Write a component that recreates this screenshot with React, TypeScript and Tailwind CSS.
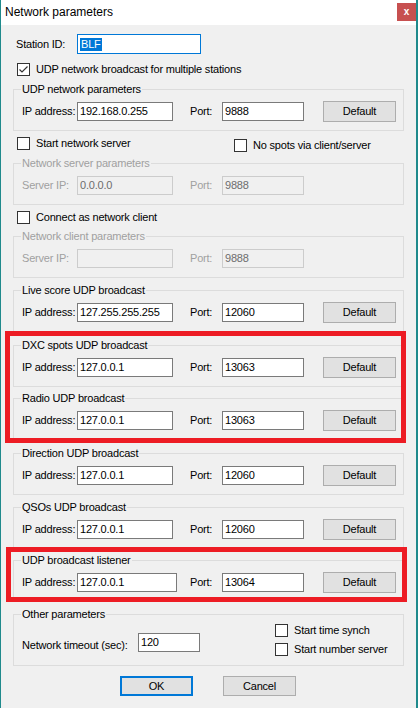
import React from "react";

const Box = ({ value, w, disabled }: { value: string; w: string; disabled?: boolean }) => (
    <div
        className={`flex h-[19px] ${w} items-center border pl-[2px] ${
            disabled ? "border-[#cccccc] bg-[#f0f0f0] text-[#6d6d6d]" : "border-[#7a7a7a] bg-white text-black"
        }`}
    >
        {value}
    </div>
);

const Check = ({ checked, label, className = "" }: { checked?: boolean; label: string; className?: string }) => (
    <div className={`flex h-[13px] items-center ${className}`}>
        <span className="flex h-[13px] w-[13px] shrink-0 items-center justify-center border border-[#333333] bg-white">
            {checked && (
                <svg width="11" height="11" viewBox="0 0 11 11">
                    <path d="M1.5 5.5 L4 8 L9.5 2.5" fill="none" stroke="#333333" strokeWidth="1.2" />
                </svg>
            )}
        </span>
        <span className="ml-[6px] whitespace-nowrap">{label}</span>
    </div>
);

type RowProps = {
    label?: string;
    ip: string;
    port: string;
    wide?: boolean;
    disabled?: boolean;
    button?: boolean;
};

const AddrRow = ({ label = "IP address:", ip, port, wide, disabled, button = true }: RowProps) => {
    const txt = disabled ? "text-[#a0a0a0]" : "text-black";
    return (
        <div className="flex h-[21px] items-center">
            <span className={`w-[55px] whitespace-nowrap ${txt}`}>{label}</span>
            <Box value={ip} w={wide ? "w-[100px]" : "w-[96px]"} disabled={disabled} />
            <span className={`${wide ? "ml-[13px]" : "ml-[17px]"} w-[32px] ${txt}`}>Port:</span>
            <Box value={port} w="w-[82px]" disabled={disabled} />
            {button && (
                <button className="ml-[19px] h-[21px] w-[73px] border border-[#adadad] bg-[#e1e1e1] text-black">
                    Default
                </button>
            )}
        </div>
    );
};

const Group = ({
    title,
    disabled,
    className = "",
    children,
}: {
    title: string;
    disabled?: boolean;
    className?: string;
    children: React.ReactNode;
}) => (
    <fieldset className={`w-[391px] border border-[#dcdcdc] pb-[8px] pl-[8px] pt-[5px] ${className}`}>
        <legend className={`-ml-[1px] px-[1px] leading-[13px] ${disabled ? "text-[#a0a0a0]" : "text-black"}`}>
            {title}
        </legend>
        {children}
    </fieldset>
);

export default function App() {
    return (
        <div className="flex h-[708px] w-[418px] flex-col border-l border-r-2 border-[#1f8a8c] bg-[#f0f0f0] font-['Liberation_Sans',Arial,sans-serif] text-[11px] leading-[13px] tracking-[-0.2px] text-black">
            {/* Title bar */}
            <div className="flex h-[25px] shrink-0 items-start justify-between bg-white">
                <span className="mt-[5px] pl-[4px] text-[12px] leading-[14px] tracking-normal">Network parameters</span>
                <div className="mt-[3px] flex h-[18px] w-[19px] items-center justify-center bg-[#c75050] text-[10px] font-bold leading-none text-white">
                    x
                </div>
            </div>

            <div className="flex flex-col pl-[12px]">
                {/* Station ID */}
                <div className="mt-[9px] flex h-[20px] items-center">
                    <span className="ml-[3px] w-[61px]">Station ID:</span>
                    <div className="flex h-[20px] w-[124px] items-center border border-[#0078d7] bg-white pl-[2px]">
                        <span className="bg-[#0078d7] px-[1px] text-white">BLF</span>
                    </div>
                </div>

                <Check checked label="UDP network broadcast for multiple stations" className="ml-[4px] mt-[9px]" />

                <Group title="UDP network parameters" className="mt-[7px]">
                    <AddrRow ip="192.168.0.255" port="9888" />
                </Group>

                <div className="mt-[6px] flex h-[15px] items-start">
                    <Check label="Start network server" className="ml-[4px] w-[217px]" />
                    <Check label="No spots via client/server" className="mt-[2px]" />
                </div>

                <Group title="Network server parameters" disabled className="mt-[5px]">
                    <AddrRow label="Server IP:" ip="0.0.0.0" port="9888" disabled button={false} />
                </Group>

                <Check label="Connect as network client" className="ml-[4px] mt-[6px]" />

                <Group title="Network client parameters" disabled className="mt-[6px]">
                    <AddrRow label="Server IP:" ip="" port="9888" disabled button={false} />
                </Group>

                <Group title="Live score UDP broadcast" className="mt-[6px]">
                    <AddrRow ip="127.255.255.255" port="12060" />
                </Group>

                <div className="relative mt-[7px] w-[391px]">
                    <Group title="DXC spots UDP broadcast">
                        <AddrRow ip="127.0.0.1" port="13063" />
                    </Group>
                    <Group title="Radio UDP broadcast" className="mt-[5px]">
                        <AddrRow ip="127.0.0.1" port="13063" />
                    </Group>
                    <div className="pointer-events-none absolute -bottom-[3px] -left-[8px] -right-[2px] -top-[8px] border-[5px] border-[#ed1c24]" />
                </div>

                <Group title="Direction UDP broadcast" className="mt-[7px]">
                    <AddrRow ip="127.0.0.1" port="12060" />
                </Group>

                <Group title="QSOs UDP broadcast" className="mt-[6px]">
                    <AddrRow ip="127.0.0.1" port="12060" />
                </Group>

                <div className="relative mt-[5px] w-[391px]">
                    <Group title="UDP broadcast listener">
                        <AddrRow ip="127.0.0.1" port="13064" wide />
                    </Group>
                    <div className="pointer-events-none absolute -left-[7px] -right-[3px] -top-[7px] bottom-0 border-[5px] border-[#ed1c24]" />
                </div>

                <fieldset className="mt-[6px] w-[391px] border border-[#dcdcdc] pb-[9px] pl-[8px] pt-[3px]">
                    <legend className="-ml-[1px] px-[1px] leading-[13px]">Other parameters</legend>
                    <div className="flex items-start">
                        <span className="mt-[12px] flex h-[19px] w-[116px] items-center whitespace-nowrap">Network timeout (sec):</span>
                        <div className="mt-[9px]">
                            <Box value="120" w="w-[62px]" />
                        </div>
                        <div className="ml-[75px] flex flex-col gap-[6px]">
                            <Check label="Start time synch" />
                            <Check label="Start number server" />
                        </div>
                    </div>
                </fieldset>

                <div className="mt-[10px] flex">
                    <button className="ml-[107px] h-[20px] w-[73px] border-2 border-[#0078d7] bg-[#e1e1e1] text-black">OK</button>
                    <button className="ml-[30px] h-[20px] w-[73px] border border-[#adadad] bg-[#e1e1e1] text-black">Cancel</button>
                </div>
            </div>
        </div>
    );
}
